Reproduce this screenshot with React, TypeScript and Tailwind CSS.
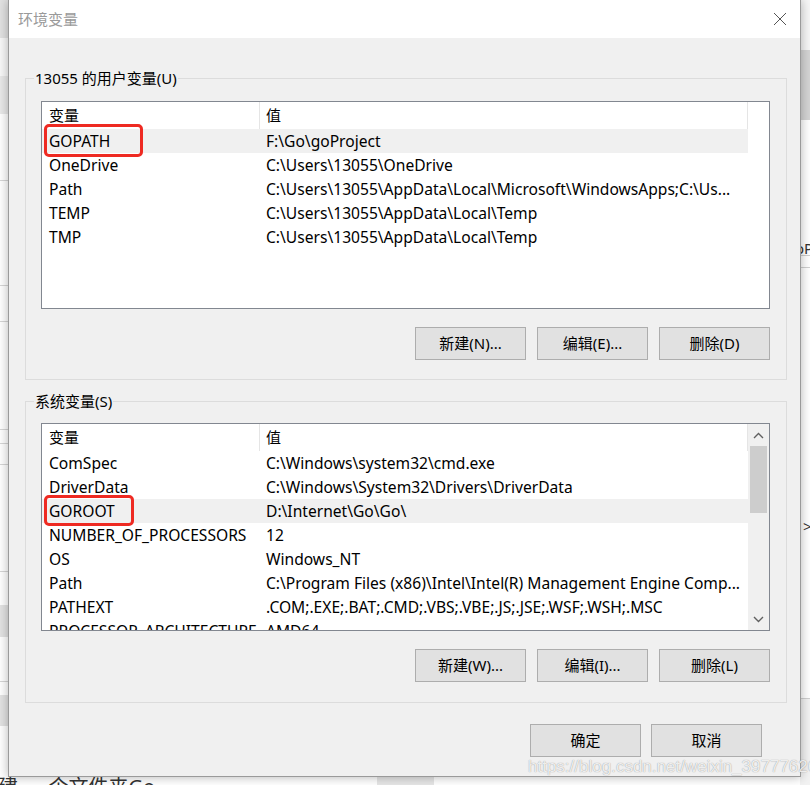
import React from 'react'

type Row = [string, string]

const userVars: Row[] = [
  ['GOPATH', 'F:\\Go\\goProject'],
  ['OneDrive', 'C:\\Users\\13055\\OneDrive'],
  ['Path', 'C:\\Users\\13055\\AppData\\Local\\Microsoft\\WindowsApps;C:\\Us...'],
  ['TEMP', 'C:\\Users\\13055\\AppData\\Local\\Temp'],
  ['TMP', 'C:\\Users\\13055\\AppData\\Local\\Temp'],
]

const systemVars: Row[] = [
  ['ComSpec', 'C:\\Windows\\system32\\cmd.exe'],
  ['DriverData', 'C:\\Windows\\System32\\Drivers\\DriverData'],
  ['GOROOT', 'D:\\Internet\\Go\\Go\\'],
  ['NUMBER_OF_PROCESSORS', '12'],
  ['OS', 'Windows_NT'],
  ['Path', 'C:\\Program Files (x86)\\Intel\\Intel(R) Management Engine Comp...'],
  ['PATHEXT', '.COM;.EXE;.BAT;.CMD;.VBS;.VBE;.JS;.JSE;.WSF;.WSH;.MSC'],
  ['PROCESSOR_ARCHITECTURE', 'AMD64'],
]

const Chevron = ({ up }: { up?: boolean }) => (
  <svg width="11" height="7" viewBox="0 0 11 7">
    <polyline
      points={up ? '1,6 5.5,1.5 10,6' : '1,1 5.5,5.5 10,1'}
      fill="none"
      stroke="#606060"
      strokeWidth="1.4"
    />
  </svg>
)

const ListView = ({ rows, selected, scroll }: { rows: Row[]; selected: number; scroll?: boolean }) => (
  <div className="flex h-[208px] border border-[#828790] bg-white overflow-hidden">
    <div className="w-[706px] flex flex-col">
      {/* header */}
      <div className="flex h-[27px] shrink-0 items-center">
        <div className="w-[217px] pl-[7px]">变量</div>
        <div className="w-px h-full bg-[#e5e5e5]" />
        <div className="w-[487px] pl-[6px]">值</div>
        <div className="w-px h-full bg-[#e5e5e5]" />
      </div>
      {rows.map((r, i) => (
        <div
          key={i}
          className={`flex h-[24px] shrink-0 items-center pt-[2px] whitespace-nowrap text-[15.6px] ${i === selected ? 'bg-[#f0f0f0]' : ''}`}
        >
          <div className="w-[218px] pl-[7px]">{r[0]}</div>
          <div className="pl-[6px]">{r[1]}</div>
        </div>
      ))}
    </div>
    {scroll && (
      <div className="w-[21px] flex flex-col bg-[#f0f0f0]">
        <div className="h-[22px] flex items-center justify-center">
          <Chevron up />
        </div>
        <div className="mx-[2px] h-[67px] bg-[#cdcdcd]" />
        <div className="flex-1" />
        <div className="h-[22px] flex items-center justify-center">
          <Chevron />
        </div>
      </div>
    )}
  </div>
)

const Btn = ({ children }: { children: React.ReactNode }) => (
  <div className="w-[111px] h-[33px] flex items-center justify-center border border-[#adadad] bg-[#e1e1e1]">
    {children}
  </div>
)

const Group = ({ label, children }: { label: string; children: React.ReactNode }) => (
  <div className="relative h-[302px] border border-[#dcdcdc] pl-[15px] pr-[16px]">
    <div className="absolute left-[8px] top-[-11px] px-[1px] leading-[20px] bg-[#f0f0f0]">{label}</div>
    {children}
  </div>
)

export default function App() {
  return (
    <div className="relative w-[810px] h-[785px] overflow-hidden bg-white text-[15px] text-black font-['Noto_Sans','Noto_Sans_CJK_SC',sans-serif]">
      {/* desktop behind */}
      <div className="flex h-full">
        <div className="w-[8px] flex flex-col">
          <div className="h-[38px] bg-[#e2e2e2]" />
          <div className="h-[38px] bg-[#f8f8f8]" />
          <div className="h-[38px] bg-[#e9e9e9]" />
          <div className="h-[67px] border-b border-[#d6d6d6]" />
          <div className="h-[105px] border-b border-[#d6d6d6]" />
          <div className="h-[36px] border-b border-[#d6d6d6]" />
          <div className="h-[108px] border-b border-[#d6d6d6]" />
          <div className="h-[14px] border-b border-[#d6d6d6]" />
          <div className="h-[21px] border-b border-[#d6d6d6]" />
          <div className="h-[107px] border-b border-[#d6d6d6]" />
          <div className="h-[33px]" />
          <div className="h-[32px] bg-[#e3e3e3]" />
          <div className="h-[45px] border-b border-[#d6d6d6]" />
          <div className="h-[13px]" />
          <div className="h-[31px] bg-[#e3e3e3]" />
          <div className="flex-1" />
        </div>
        <div className="flex-1 flex flex-col">
          <div className="flex-1" />
          <div className="h-[9px] flex">
            <div className="w-[379px] overflow-hidden whitespace-nowrap text-[20px] leading-[24px] text-[#333] ml-[-10px]">
              <div className="mt-[-1px]">建&nbsp;&nbsp;一个文件夹Go</div>
            </div>
            <div className="w-[57px] bg-[#e6e6e6]" />
          </div>
        </div>
        <div className="w-[10px] flex flex-col overflow-hidden text-[15px] leading-[20px] text-[#333]">
          <div className="h-[50px] bg-[#f6f6f6]" />
          <div className="h-[70px] bg-[#d4d4d4]" />
          <div className="h-[118px]" />
          <div className="h-[18px] ml-[-5px] border-b border-[#d0d0d0]">oP</div>
          <div className="h-[12px] border-b border-[#d0d0d0]" />
          <div className="h-[248px]" />
          <div className="h-[20px] ml-[3px]">&gt;</div>
          <div className="h-[163px] border-b border-[#d0d0d0]" />
          <div className="flex-1 bg-[#f2f2f2]" />
        </div>
      </div>

      {/* dialog window */}
      <div className="absolute left-[8px] top-0 w-[793px] h-[777px] flex flex-col border-x border-b border-[#9a9a9a] bg-[#f0f0f0] shadow-[0_0_10px_rgba(0,0,0,0.3)]">
        <div className="h-[38px] shrink-0 flex items-center justify-between bg-white pl-[9px] pr-[13px]">
          <span className="text-[#9a9a9a]">环境变量</span>
          <svg width="14" height="14" viewBox="0 0 14 14">
            <path d="M1 1 L13 13 M13 1 L1 13" stroke="#555" strokeWidth="1" />
          </svg>
        </div>
        <div className="flex flex-col pl-[16px] pr-[13px]">
          <div className="mt-[40px]">
            <Group label="13055 的用户变量(U)">
              <div className="pt-[22px]">
                <ListView rows={userVars} selected={0} />
                <div className="mt-[18px] flex justify-end gap-[11px]">
                  <Btn>新建(N)...</Btn>
                  <Btn>编辑(E)...</Btn>
                  <Btn>删除(D)</Btn>
                </div>
              </div>
            </Group>
          </div>
          <div className="mt-[21px]">
            <Group label="系统变量(S)">
              <div className="pt-[21px]">
                <ListView rows={systemVars} selected={2} scroll />
                <div className="mt-[18px] flex justify-end gap-[11px]">
                  <Btn>新建(W)...</Btn>
                  <Btn>编辑(I)...</Btn>
                  <Btn>删除(L)</Btn>
                </div>
              </div>
            </Group>
          </div>
          <div className="mt-[21px] mr-[25px] flex justify-end gap-[10px]">
            <Btn>确定</Btn>
            <Btn>取消</Btn>
          </div>
        </div>
      </div>

      {/* red annotations */}
      <div className="absolute left-[44px] top-[124px] w-[99px] h-[33px] border-[3px] border-[#ee2a22] rounded-[5px]" />
      <div className="absolute left-[44px] top-[495px] w-[90px] h-[31px] border-[3px] border-[#ee2a22] rounded-[5px]" />

      {/* watermark */}
      <div className="absolute left-[528px] top-[756px] whitespace-nowrap text-[17px] leading-[22px] font-['Liberation_Sans',sans-serif] text-[rgba(255,255,255,0.85)] [text-shadow:0_0_1px_rgba(0,0,0,0.45)]">
        https://blog.csdn.net/weixin_39777626
      </div>
    </div>
  )
}
